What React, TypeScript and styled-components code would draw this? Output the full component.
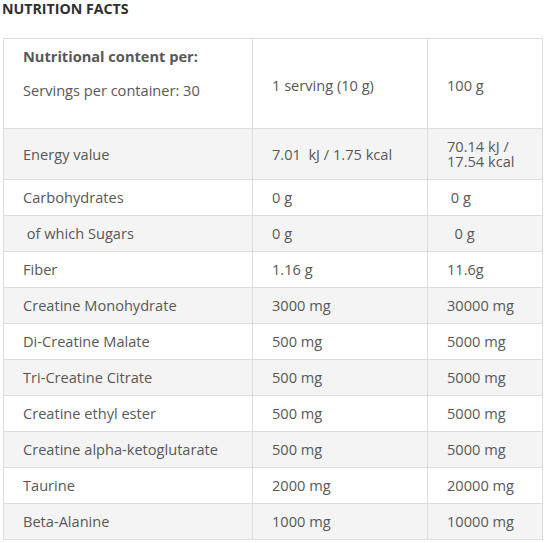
import React from 'react'
import styled, { createGlobalStyle } from 'styled-components'

const GlobalStyle = createGlobalStyle`
    body {
        margin: 0;
        background: #fff;
        font-family: "Open Sans", "Liberation Sans", sans-serif;
    }
`

type Item = [string, string, string]

const rows: Item[] = [
    ['Energy value', '7.01\u00a0 kJ / 1.75 kcal', '70.14 kJ / 17.54 kcal'],
    ['Carbohydrates', '0 g', '\u00a00 g'],
    ['\u00a0of which Sugars', '0 g', '\u00a0\u00a00 g'],
    ['Fiber', '1.16 g', '11.6g'],
    ['Creatine Monohydrate', '3000 mg', '30000 mg'],
    ['Di-Creatine Malate', '500 mg', '5000 mg'],
    ['Tri-Creatine Citrate', '500 mg', '5000 mg'],
    ['Creatine ethyl ester', '500 mg', '5000 mg'],
    ['Creatine alpha-ketoglutarate', '500 mg', '5000 mg'],
    ['Taurine', '2000 mg', '20000 mg'],
    ['Beta-Alanine', '1000 mg', '10000 mg'],
]

export default function App() {
    return (
        <Page>
            <GlobalStyle />
            <Title>NUTRITION FACTS</Title>
            <Table>
                <colgroup>
                    <col style={{ width: 249 }} />
                    <col style={{ width: 175 }} />
                    <col style={{ width: 115 }} />
                </colgroup>
                <tbody>
                    <Row>
                        <Cell>
                            <HeadBlock>
                                <strong>Nutritional content per:</strong>
                                <span>Servings per container: 30</span>
                            </HeadBlock>
                        </Cell>
                        <Cell $shift>1 serving (10 g)</Cell>
                        <Cell $shift>100 g</Cell>
                    </Row>
                    {rows.map((r, i) => (
                        <Row key={i} $striped={i % 2 === 0}>
                            <Cell>{r[0]}</Cell>
                            <Cell>{r[1]}</Cell>
                            <Cell>{r[2]}</Cell>
                        </Row>
                    ))}
                </tbody>
            </Table>
        </Page>
    )
}

const Page = styled.div`
    padding: 0 3px;
`

const Title = styled.h2`
    margin: 0 0 0 -1px;
    padding-top: 2px;
    height: 36px;
    font-size: 14.2px;
    line-height: 14px;
    font-weight: 700;
    color: #2f2f2f;
`

const Table = styled.table`
    width: 539px;
    table-layout: fixed;
    border-collapse: collapse;
    border: 1px solid #ddd;
    font-size: 14.6px;
    color: #585858;
`

const Row = styled.tr<{ $striped?: boolean }>`
    background: ${p => (p.$striped ? '#f4f4f4' : '#fff')};
`

const Cell = styled.td<{ $shift?: boolean }>`
    border: 1px solid #ddd;
    padding: ${p => (p.$shift ? '12px 19px 9px 19px' : '10px 19px 10px 19px')};
    line-height: 15px;
    vertical-align: middle;
    white-space: pre-wrap;
`

const HeadBlock = styled.div`
    display: flex;
    flex-direction: column;
    gap: 19px;
    margin-bottom: 20px;

    & strong {
        font-weight: 700;
    }
`
